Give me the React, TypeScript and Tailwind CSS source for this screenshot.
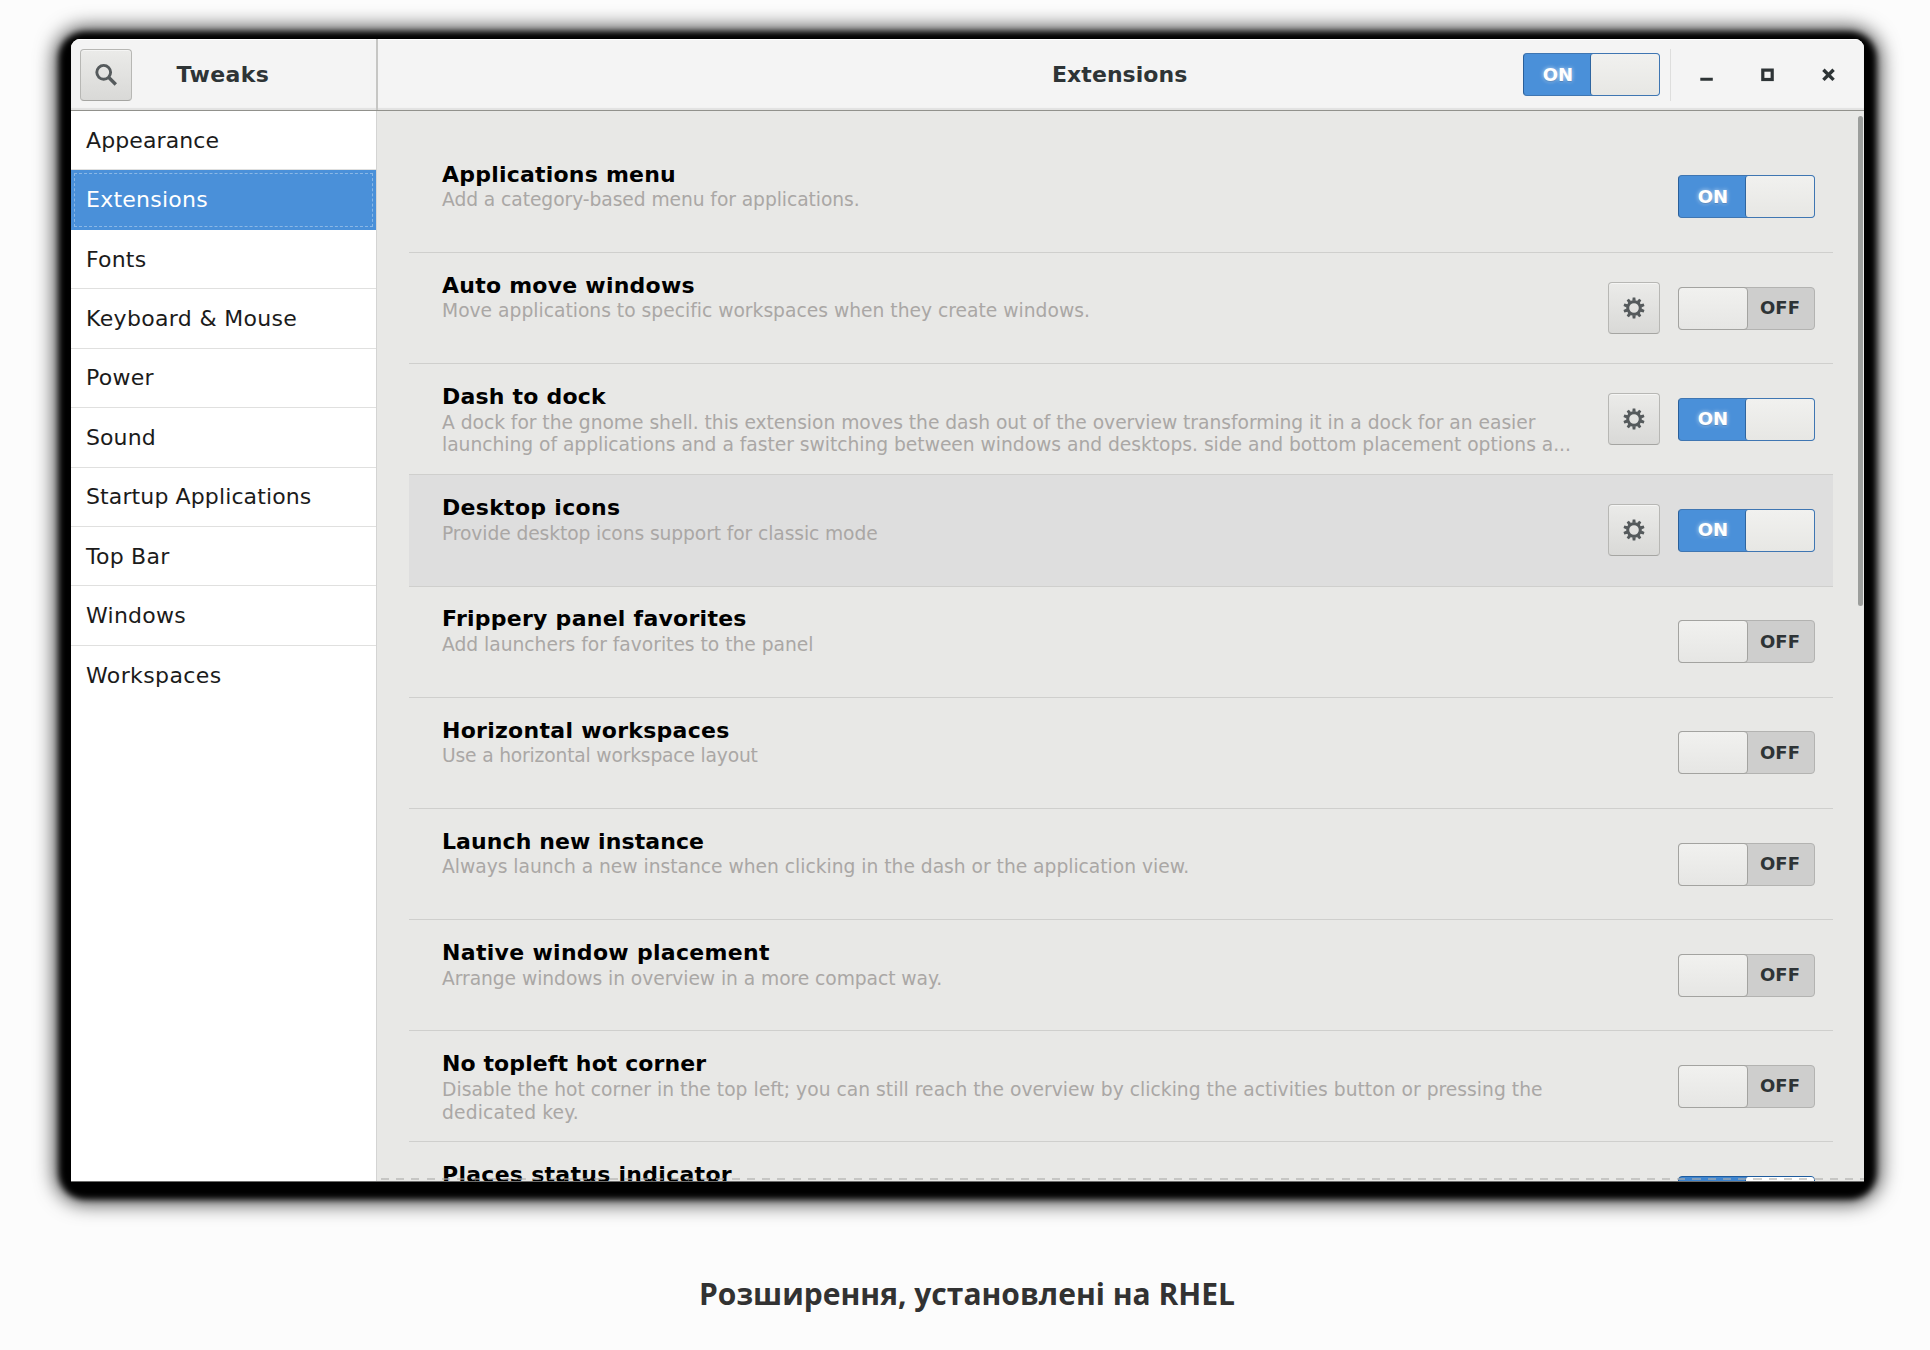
import clsx from 'clsx';

type Line = { text: string; tracking?: string };
type Extension = {
  title: string;
  tracking: string;
  lines: Line[];
  on: boolean;
  gear?: boolean;
  hovered?: boolean;
};

const sections: Line[] = [
  { text: 'Appearance', tracking: 'tracking-[0.1px]' },
  { text: 'Extensions', tracking: 'tracking-[0.25px]' },
  { text: 'Fonts', tracking: 'tracking-[0.2px]' },
  { text: 'Keyboard & Mouse', tracking: 'tracking-[0.33px]' },
  { text: 'Power', tracking: 'tracking-[0.25px]' },
  { text: 'Sound', tracking: 'tracking-[0.1px]' },
  { text: 'Startup Applications', tracking: 'tracking-[0.12px]' },
  { text: 'Top Bar', tracking: 'tracking-[0.25px]' },
  { text: 'Windows', tracking: 'tracking-[0.26px]' },
  { text: 'Workspaces', tracking: 'tracking-[0.38px]' },
];

const extensions: Extension[] = [
  {
    title: 'Applications menu',
    tracking: 'tracking-[0.22px]',
    lines: [{ text: 'Add a category-based menu for applications.', tracking: 'tracking-[-0.07px]' }],
    on: true,
  },
  {
    title: 'Auto move windows',
    tracking: 'tracking-[0.24px]',
    lines: [
      { text: 'Move applications to specific workspaces when they create windows.', tracking: 'tracking-[0.003px]' },
    ],
    on: false,
    gear: true,
  },
  {
    title: 'Dash to dock',
    tracking: 'tracking-[0.21px]',
    lines: [
      {
        text: 'A dock for the gnome shell. this extension moves the dash out of the overview transforming it in a dock for an easier',
        tracking: 'tracking-[-0.032px]',
      },
      {
        text: 'launching of applications and a faster switching between windows and desktops. side and bottom placement options a...',
        tracking: 'tracking-[-0.024px]',
      },
    ],
    on: true,
    gear: true,
  },
  {
    title: 'Desktop icons',
    tracking: 'tracking-[0.3px]',
    lines: [{ text: 'Provide desktop icons support for classic mode', tracking: 'tracking-[-0.1px]' }],
    on: true,
    gear: true,
    hovered: true,
  },
  {
    title: 'Frippery panel favorites',
    tracking: 'tracking-[0.26px]',
    lines: [{ text: 'Add launchers for favorites to the panel', tracking: 'tracking-[-0.016px]' }],
    on: false,
  },
  {
    title: 'Horizontal workspaces',
    tracking: 'tracking-[0.28px]',
    lines: [{ text: 'Use a horizontal workspace layout', tracking: 'tracking-[-0.18px]' }],
    on: false,
  },
  {
    title: 'Launch new instance',
    tracking: 'tracking-[0.09px]',
    lines: [
      {
        text: 'Always launch a new instance when clicking in the dash or the application view.',
        tracking: 'tracking-[-0.014px]',
      },
    ],
    on: false,
  },
  {
    title: 'Native window placement',
    tracking: 'tracking-[0.31px]',
    lines: [{ text: 'Arrange windows in overview in a more compact way.', tracking: 'tracking-[-0.06px]' }],
    on: false,
  },
  {
    title: 'No topleft hot corner',
    tracking: 'tracking-[0.1px]',
    lines: [
      {
        text: 'Disable the hot corner in the top left; you can still reach the overview by clicking the activities button or pressing the',
        tracking: 'tracking-[0.025px]',
      },
      { text: 'dedicated key.', tracking: 'tracking-[0.15px]' },
    ],
    on: false,
  },
  { title: 'Places status indicator', tracking: 'tracking-[0.28px]', lines: [], on: true },
];

function Switch({ on, vivid = false }: { on: boolean; vivid?: boolean }) {
  if (on) {
    return (
      <div
        className={clsx(
          'flex h-[43px] w-[137px] shrink-0 rounded-[4px] border-[1.5px]',
          vivid ? 'border-[#1f5c9e] bg-[#3f85cf]' : 'border-[#3f76b2] border-l-[#2a5f99] bg-[#4a90d9]',
        )}
      >
        <span className="flex flex-1 items-center justify-center pl-[2px] text-[18px] leading-[20px] font-bold tracking-[0.1px] text-white [text-shadow:0_0_4px_rgba(255,255,255,0.7),0_1px_1px_rgba(30,80,140,0.6)]">
          ON
        </span>
        <span
          className={clsx(
            'w-[69px] rounded-[3px] border-l-[1.5px] bg-linear-to-b',
            vivid ? 'border-[#1f5c9e] from-white to-white' : 'border-[#2f659f] from-[#f1f1ef] to-[#e7e7e4]',
          )}
        />
      </div>
    );
  }
  return (
    <div className="flex h-[43px] w-[137px] shrink-0 rounded-[4px] border border-[#b3b3b1] bg-[#cececd]">
      <span className="-m-px w-[70px] rounded-[4px] border border-[#a3a3a0] bg-linear-to-b from-[#f1f1ef] to-[#e6e6e4]" />
      <span className="flex flex-1 items-center justify-center pr-px text-[18px] leading-[20px] font-bold tracking-[0.1px] text-[#2e3436]">
        OFF
      </span>
    </div>
  );
}

const teeth = [0, 36, 72, 108, 144, 180, 216, 252, 288, 324];

function Gear() {
  return (
    <svg className="size-[22px]" viewBox="-11 -11 22 22">
      <circle r="6.3" fill="none" stroke="#555a5c" strokeWidth="3" />
      {teeth.map((angle) => (
        <path key={angle} d="M-1.7 -7.2L-1.3 -10.6H1.3L1.7 -7.2Z" fill="#555a5c" transform={`rotate(${angle})`} />
      ))}
    </svg>
  );
}

const buttonClass =
  'flex size-[52px] shrink-0 items-center justify-center rounded-[4px] border border-[#b7b7b4] border-b-[#a5a5a2] bg-linear-to-b from-[#ebebe9] to-[#d9d9d7] shadow-[inset_0_1px_0_rgba(255,255,255,0.5)]';

export default function App() {
  return (
    <div className="flex h-[1350px] w-[1930px] flex-col overflow-hidden bg-[#fcfcfc] pt-[39px] font-['DejaVu_Sans',sans-serif]">
      <div className="ml-[71px] h-[1143px] w-[1793px] shrink-0 rounded-[14px] bg-black shadow-[0_5px_6px_12px_#000,0_5px_20px_16px_rgba(0,0,0,0.75)]">
        <div className="relative flex h-full flex-col overflow-hidden rounded-t-[9px] border-b border-[#6b6b6a] bg-[#e8e8e6]">
          <header className="flex h-[72px] shrink-0 border-b-[1.5px] border-[#91918c] bg-[#f4f4f4] text-[22px] font-bold text-[#2e3436] shadow-[inset_0_1px_0_#fff,inset_0_-2px_1px_#e2e2e1]">
            <div className="flex w-[307px] items-center border-r-2 border-[#c6c6c4] pl-[9px]">
              <button className={buttonClass}>
                <svg className="size-[24px]" viewBox="0 0 24 24" fill="none" stroke="#555a5c">
                  <circle cx="9.7" cy="9.3" r="6.9" strokeWidth="2.9" />
                  <path d="M14.8 14.5L21.8 21.5" strokeWidth="3.4" />
                </svg>
              </button>
              <span className="ml-[44.5px] leading-[26px] tracking-[0.4px]">Tweaks</span>
            </div>
            <div className="flex flex-1 items-center">
              <span className="ml-[674px] w-[471px] leading-[26px] tracking-[0.06px]">Extensions</span>
              <Switch on />
              <span className="ml-[10px] h-[52px] w-px bg-[#dededd]" />
              <div className="flex flex-1 items-center pl-[29px]">
                <svg className="h-[14px] w-[136px]" viewBox="0 0 136 14" fill="none" stroke="#2e3436">
                  <path d="M0.3 11.2H12.8" strokeWidth="3" />
                  <rect x="62.8" y="2.1" width="9.4" height="9.4" strokeWidth="3.2" />
                  <path d="M123.4 1.7L133.6 11.9M133.6 1.7L123.4 11.9" strokeWidth="3.4" />
                </svg>
              </div>
            </div>
          </header>

          <div className="flex min-h-0 flex-1">
            <nav className="w-[305px] shrink-0 bg-white text-[22px] text-[#1b1b1b]">
              {sections.map(({ text, tracking }, i) => (
                <div
                  key={text}
                  className={clsx(
                    'flex h-[59.43px] items-center border-b pt-px pl-[15px] leading-[26px]',
                    tracking,
                    text === 'Extensions'
                      ? 'border-[#4a90d9] bg-[#4a90d9] text-white outline-1 -outline-offset-4 outline-dashed outline-[#8ab7e6]'
                      : i === sections.length - 1
                        ? 'border-transparent'
                        : 'border-[#e0e0df]',
                  )}
                >
                  {text}
                </div>
              ))}
            </nav>

            <main className="flex-1 overflow-hidden border-l border-[#d4d4d3] pt-[30.8px] pl-[31.5px]">
              <ul className="w-[1424.5px]">
                {extensions.map((ext, i) => (
                  <li
                    key={ext.title}
                    className={clsx(
                      'flex h-[111.2px] items-center border-b border-[#cfcfcd] pr-[18px] pl-[33.5px]',
                      ext.hovered && 'bg-[#dedede]',
                    )}
                  >
                    <div className="h-full flex-1 pt-[18.9px] whitespace-nowrap">
                      <h3 className={clsx('mb-[1.5px] text-[22px] leading-[27px] font-bold text-black', ext.tracking)}>
                        {ext.title}
                      </h3>
                      {ext.lines.map((line) => (
                        <p
                          key={line.text}
                          className={clsx('text-[18.7px] leading-[22.9px] text-[#aaa7a5]', line.tracking)}
                        >
                          {line.text}
                        </p>
                      ))}
                    </div>
                    {ext.gear && (
                      <button className={clsx(buttonClass, 'mr-[18px]')}>
                        <Gear />
                      </button>
                    )}
                    <Switch on={ext.on} vivid={i === extensions.length - 1} />
                  </li>
                ))}
              </ul>
            </main>
          </div>

          <div className="absolute top-[77px] right-[1.5px] h-[490px] w-[5px] rounded-full bg-[#9c9e9c]" />
          <div className="absolute right-0 bottom-[1px] left-[310px] h-[2px] bg-[repeating-linear-gradient(90deg,rgba(175,175,173,0.6)_0_8px,transparent_8px_15.25px)]" />
        </div>
      </div>
      <p className="mt-[92px] text-center font-['Open_Sans',sans-serif] text-[30px] leading-[40px] font-bold text-[#323232]">
        <span className="ml-[4px]">Розширення, установлені на RHEL</span>
      </p>
    </div>
  );
}
